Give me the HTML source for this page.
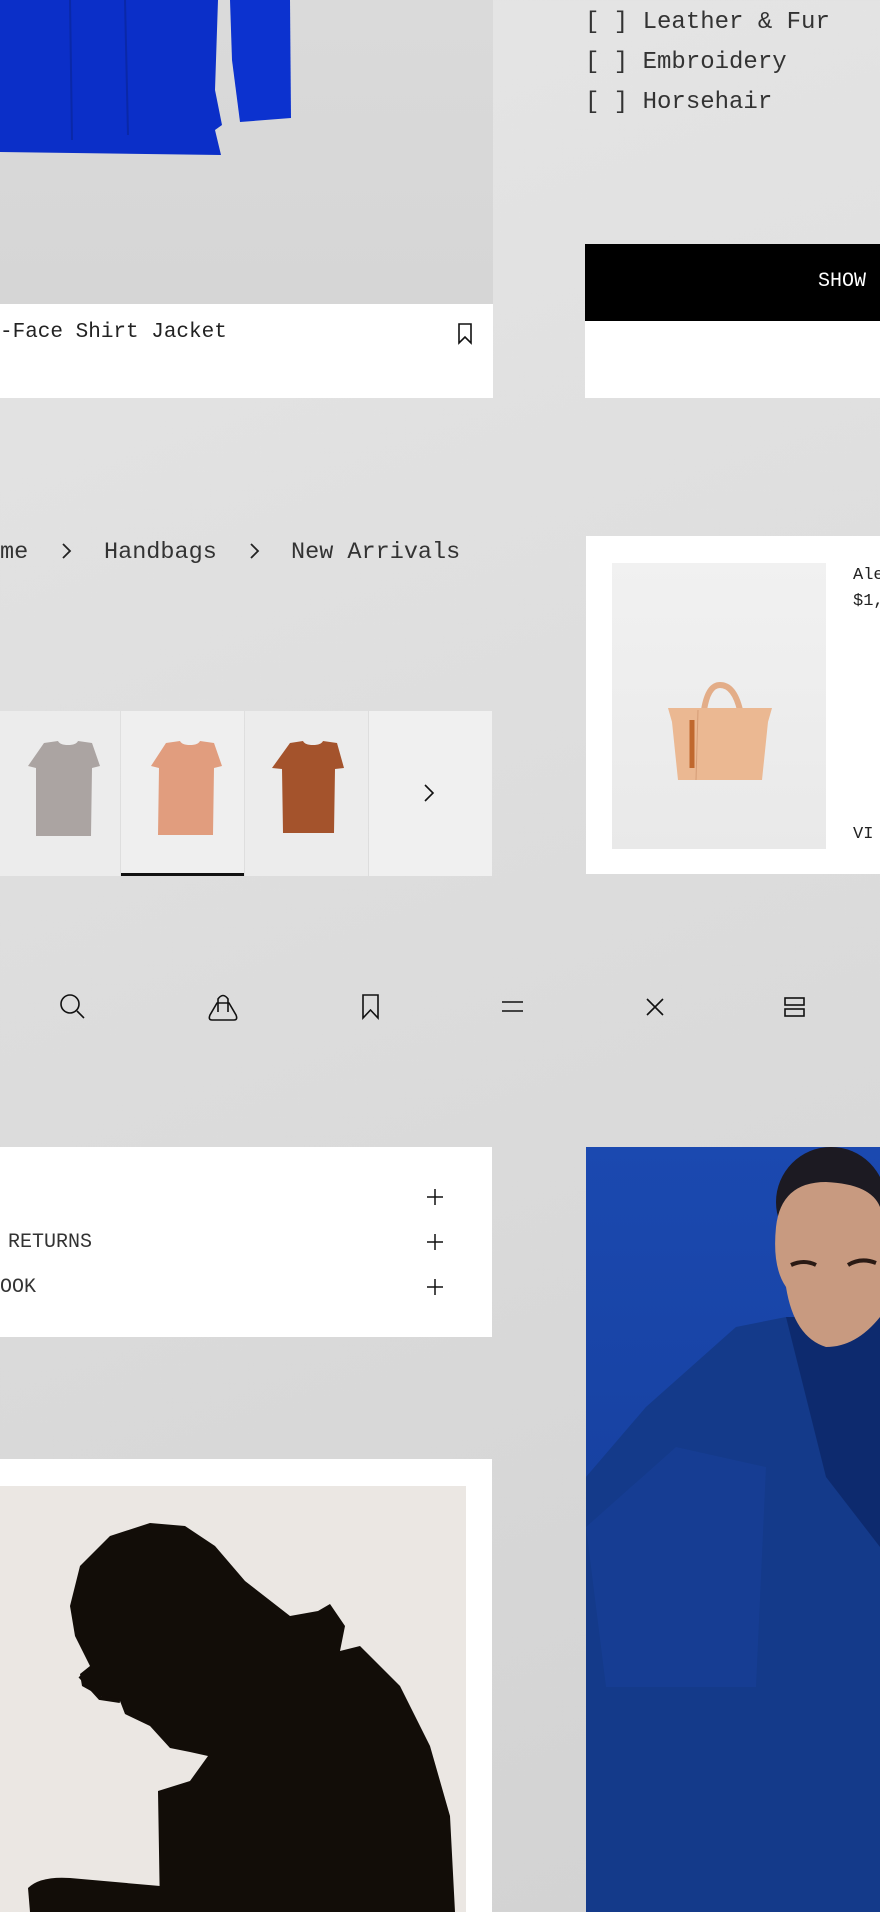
<!DOCTYPE html>
<html><head><meta charset="utf-8"><style>
*{margin:0;padding:0;box-sizing:border-box}
body{width:880px;height:1912px;overflow:hidden;position:relative;background:linear-gradient(160deg,#e6e6e6 0%,#dcdcdc 50%,#d2d2d2 100%);font-family:"Liberation Mono",monospace;color:#222}
.a{position:absolute}
.w{background:#fff}
.t{white-space:nowrap}
</style></head><body>
<!-- jacket card -->
<div class="a" style="left:0;top:0;width:493px;height:304px;background:linear-gradient(180deg,#dadada,#d6d6d6)"></div>
<svg class="a" style="left:0;top:0" width="300" height="160"><path d="M0,0 L218,0 L215,90 L222,125 L215,130 L221,155 L0,152 Z" fill="#0b2fc8"/><path d="M230,0 L290,0 L291,118 L240,122 L232,60 Z" fill="#0c32cf"/><path d="M125,0 L128,135 M70,0 L72,140" stroke="#0a28a8" stroke-width="2" fill="none"/></svg>
<div class="a w" style="left:0;top:304px;width:493px;height:94px"></div>
<div class="a t" style="left:0;top:321px;font-size:21px;line-height:24px;color:#222">-Face Shirt Jacket</div>
<svg class="a" style="left:457px;top:323px" width="16" height="22"><path d="M2,1 H14 V20 L8,14 L2,20 Z" fill="none" stroke="#111" stroke-width="1.6"/></svg>
<!-- filters -->
<div class="a t" style="left:585px;top:3px;font-size:24px;line-height:40px;color:#333">
<div>[ ]&nbsp;Leather &amp; Fur</div><div>[ ]&nbsp;Embroidery</div><div>[ ]&nbsp;Horsehair</div></div>
<div class="a" style="left:585px;top:244px;width:295px;height:77px;background:#000"></div>
<div class="a t" style="left:818px;top:270px;font-size:20px;line-height:24px;color:#fff">SHOW</div>
<div class="a w" style="left:585px;top:321px;width:295px;height:77px"></div>
<!-- breadcrumb -->
<div class="a t" style="left:0;top:539px;font-size:23.5px;line-height:28px;color:#333">me</div>
<svg class="a" style="left:60px;top:542px" width="12" height="18"><path d="M3,2 L10,9 L3,16" fill="none" stroke="#222" stroke-width="1.8"/></svg>
<div class="a t" style="left:104px;top:539px;font-size:23.5px;line-height:28px;color:#333">Handbags</div>
<svg class="a" style="left:248px;top:542px" width="12" height="18"><path d="M3,2 L10,9 L3,16" fill="none" stroke="#222" stroke-width="1.8"/></svg>
<div class="a t" style="left:291px;top:539px;font-size:23.5px;line-height:28px;color:#333">New Arrivals</div>
<!-- thumbs -->
<div class="a" style="left:0;top:711px;width:120px;height:165px;background:#ececec"></div>
<div class="a" style="left:121px;top:711px;width:123px;height:165px;background:#efefef"></div>
<div class="a" style="left:245px;top:711px;width:123px;height:165px;background:#ececec"></div>
<div class="a" style="left:369px;top:711px;width:123px;height:165px;background:#f0f0f0"></div>
<div class="a" style="left:121px;top:873px;width:123px;height:3px;background:#111"></div>
<svg class="a" style="left:0;top:711px" width="492" height="165">
<path d="M44,32 L58,30 Q60,34 68,34 Q76,34 78,30 L92,32 L100,55 L92,57 L91,125 L36,125 L36,57 L28,55 Z" fill="#aba4a2"/>
<path d="M166,32 L180,30 Q182,34 190,34 Q198,34 200,30 L214,32 L222,55 L214,57 L213,124 L158,124 L159,57 L151,55 Z" fill="#e19d7e"/>
<path d="M290,32 L303,30 Q305,34 313,34 Q321,34 323,30 L337,32 L344,57 L335,58 L334,122 L283,122 L282,58 L272,57 Z" fill="#a4532c"/>
<path d="M425,74 L433,82 L425,90" fill="none" stroke="#111" stroke-width="1.6"/>
</svg>
<!-- bag card -->
<div class="a w" style="left:586px;top:536px;width:294px;height:338px"></div>
<div class="a" style="left:612px;top:563px;width:214px;height:286px;background:linear-gradient(180deg,#f1f1f1,#e9e9e9)"></div>
<svg class="a" style="left:660px;top:680px" width="120" height="110"><path d="M44,30 Q48,5 60,5 Q74,5 80,30" fill="none" stroke="#e3ad88" stroke-width="6"/><path d="M8,28 L112,28 L108,42 L102,100 L18,100 L12,42 Z" fill="#ebb892"/><path d="M32,40 L32,88" stroke="#c0682e" stroke-width="5"/><path d="M38,30 L36,100" stroke="#d59c76" stroke-width="1"/></svg>
<div class="a t" style="left:853px;top:563px;font-size:17px;line-height:26px;color:#222">Ale<br>$1,</div>
<div class="a t" style="left:853px;top:824px;font-size:17px;line-height:22px;color:#222">VI</div>
<!-- icons -->
<svg class="a" style="left:0;top:985px" width="880" height="44">
<g fill="none" stroke="#111" stroke-width="1.6">
<circle cx="70" cy="19" r="9"/><path d="M77,26 L84,33"/>
<path d="M212,35 Q208,35 210,30 L217,18 L229,18 L236,30 Q238,35 234,35 Z"/><path d="M218,27 V14 Q223,7 228,14 V27"/>
<path d="M363,10 H378 V33 L370.5,25 L363,33 Z"/>
<path d="M502,17 H523 M502,26 H523"/>
<path d="M647,14 L663,30 M663,14 L647,30"/>
<rect x="785" y="13" width="19" height="7"/><rect x="785" y="24" width="19" height="7"/>
</g></svg>
<!-- accordion -->
<div class="a w" style="left:0;top:1147px;width:492px;height:190px"></div>
<div class="a t" style="left:8px;top:1231px;font-size:20px;line-height:24px;color:#333">RETURNS</div>
<div class="a t" style="left:0;top:1276px;font-size:20px;line-height:24px;color:#333">OOK</div>
<svg class="a" style="left:425px;top:1185px" width="20" height="115"><g stroke="#111" stroke-width="1.5"><path d="M10,4 V20 M2,12 H18"/><path d="M10,49 V65 M2,57 H18"/><path d="M10,94 V110 M2,102 H18"/></g></svg>
<!-- silhouette -->
<div class="a w" style="left:0;top:1459px;width:492px;height:453px"></div>
<svg class="a" style="left:0;top:1486px" width="466" height="426"><rect width="466" height="426" fill="#ebe7e3"/>
<path d="M160,426 L158,305 L190,295 L208,270 L190,266 L170,262 L150,240 L125,228 L120,215 L100,210 L82,200 L80,188 L90,180 L75,150 L70,120 L80,80 L110,50 L150,37 L185,40 L215,60 L245,95 L290,130 L318,125 L330,118 L345,140 L340,165 L360,160 L400,200 L430,260 L450,330 L455,426 Z" fill="#120d08"/>
<path d="M80,190 L100,212 L120,215" fill="none" stroke="#120d08" stroke-width="4"/>
<path d="M30,426 L28,402 Q40,390 70,392 L160,400 L160,426 Z" fill="#120d08"/>
</svg>
<!-- blue photo -->
<svg class="a" style="left:586px;top:1147px" width="294" height="765">
<defs><linearGradient id="g" x1="0" y1="0" x2="0" y2="1"><stop offset="0" stop-color="#1b49b0"/><stop offset="1" stop-color="#12388f"/></linearGradient></defs>
<rect width="294" height="765" fill="url(#g)"/>
<path d="M0,330 L60,260 L150,180 L200,170 L294,200 L294,765 L0,765 Z" fill="#143a8a"/>
<path d="M200,170 L294,170 L294,400 L240,330 Z" fill="#0d2a6e"/>
<path d="M0,380 L90,300 L180,320 L170,540 L20,540 Z" fill="#163f95" opacity=".8"/>
<ellipse cx="245" cy="55" rx="55" ry="55" fill="#1c1a22"/>
<path d="M190,80 Q195,35 240,35 Q285,37 294,60 L294,170 Q270,200 240,200 Q208,190 200,140 Q186,120 190,80 Z" fill="#c89a80"/>
<path d="M205,118 Q218,112 230,118 M262,118 Q275,110 290,116" stroke="#2a1a14" stroke-width="4" fill="none"/>
</svg>
</body></html>
